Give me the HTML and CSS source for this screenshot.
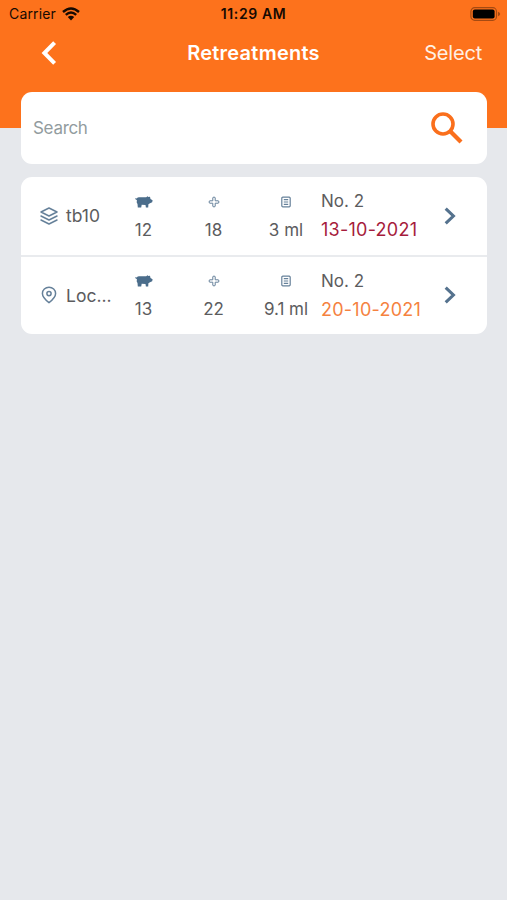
FILE: index.html
```html
<!DOCTYPE html>
<html lang="en">
<head>
    <meta charset="utf-8">
    <title>Retreatments</title>
    <link rel="stylesheet" href="styles.css">
</head>
<body>
    <svg class="sprite" width="0" height="0">
        <symbol id="pig" viewBox="0 0 18 12">
            <path d="M.3 2 L1.8 2.4 Q2.6 1 4.5 1.2 L11.2 1.3 L12.6 .3 L13.4 1 L15 .8 L15.5 3 L17.6 4.3 L17.2 6.2 L15 7.2 L13.4 8.2 L13.2 11.5 L10.9 11.5 L10.5 9 L6.7 8.8 L6.2 11.5 L2.8 11.5 L2.5 8 L1.7 6.5 L1.9 4 L.6 3.4 Z" fill="currentColor"/>
        </symbol>
        <symbol id="plus" viewBox="0 0 12 12">
            <path d="M4.8 1.6 Q6 .4 7.2 1.6 V4.8 H10.4 Q11.6 6 10.4 7.2 H7.2 V10.4 Q6 11.6 4.8 10.4 V7.2 H1.6 Q.4 6 1.6 4.8 H4.8 Z" fill="none" stroke="currentColor" stroke-linejoin="round"/>
        </symbol>
        <symbol id="dose" viewBox="0 0 12 12">
            <rect x="1.8" y="1.2" width="8.4" height="9.6" rx="1" fill="none" stroke="currentColor" stroke-width="1.2"/>
            <path d="M3.8 3.7 h4.4 M3.8 6 h4.4 M3.8 8.3 h4.4" fill="none" stroke="currentColor" stroke-width="1.2"/>
        </symbol>
        <symbol id="next" viewBox="0 0 12 18">
            <path d="M1.7 1.6 L9.4 9 L1.7 16.4" fill="none" stroke="currentColor" stroke-width="3.1"/>
        </symbol>
    </svg>

    <header class="header">
        <div class="status">
            <div class="carrier">
                <span>Carrier</span>
                <svg width="18" height="14" viewBox="0 0 18 14">
                    <path d="M1 5 Q9 -2.2 17 5 M3.8 7.9 Q9 3.2 14.2 7.9" fill="none" stroke="#160a02" stroke-width="2.4"/>
                    <path d="M5.8 10.1 Q9 7.3 12.2 10.1 L9 13.4 Z" fill="#160a02"/>
                </svg>
            </div>
            <div class="time">11:29 AM</div>
            <svg class="battery" width="31" height="14" viewBox="0 0 31 14">
                <rect x=".9" y=".7" width="25.6" height="12.6" rx="3.8" fill="none" stroke="#a54a12" stroke-width="1.2"/>
                <rect x="2.8" y="2.5" width="21.8" height="9" rx="2" fill="#000"/>
                <path d="M28 4.8 Q30.2 5.6 30.2 7 Q30.2 8.4 28 9.2 Z" fill="#a54a12"/>
            </svg>
        </div>
        <div class="nav">
            <svg class="back" width="16" height="24" viewBox="0 0 16 24">
                <path d="M13.6 1.7 L3.4 12 L13.6 22.3" fill="none" stroke="#fff" stroke-width="4"/>
            </svg>
            <h1>Retreatments</h1>
            <span class="select">Select</span>
        </div>
    </header>

    <main class="content">
        <div class="search">
            <span>Search</span>
            <svg width="32" height="32" viewBox="0 0 32 32">
                <circle cx="12" cy="12" r="10" fill="none" stroke="#fa6f1c" stroke-width="3.6"/>
                <path d="M19.5 19.5 L30 30" stroke="#fa6f1c" stroke-width="4.2"/>
            </svg>
        </div>

        <div class="list">
            <div class="row">
                <div class="name">
                    <svg width="18" height="18" viewBox="0 0 18 18">
                        <path d="M9 1 L17 5 L9 9 L1 5 Z M1 9 L9 13 L17 9 M1 13 L9 17 L17 13" fill="none" stroke="currentColor" stroke-width="1.5" stroke-linejoin="round" stroke-linecap="round"/>
                    </svg>
                    <span>tb10</span>
                </div>
                <div class="stat"><svg class="pig"><use href="#pig"/></svg><span>12</span></div>
                <div class="stat"><svg><use href="#plus"/></svg><span>18</span></div>
                <div class="stat"><svg><use href="#dose"/></svg><span>3 ml</span></div>
                <div class="treatment"><span>No. 2</span><span class="date late">13-10-2021</span></div>
                <svg class="next"><use href="#next"/></svg>
            </div>
            <div class="row">
                <div class="name">
                    <svg width="18" height="18" viewBox="0 0 18 18">
                        <path d="M9 16.6 Q2.4 11.4 2.4 7.4 A6.6 6.2 0 0 1 15.6 7.4 Q15.6 11.4 9 16.6 Z" fill="none" stroke="currentColor" stroke-width="1.5"/>
                        <circle cx="9" cy="7.6" r="2.1" fill="none" stroke="currentColor" stroke-width="1.5"/>
                    </svg>
                    <span>Loc...</span>
                </div>
                <div class="stat"><svg class="pig"><use href="#pig"/></svg><span>13</span></div>
                <div class="stat"><svg><use href="#plus"/></svg><span>22</span></div>
                <div class="stat"><svg><use href="#dose"/></svg><span>9.1 ml</span></div>
                <div class="treatment"><span>No. 2</span><span class="date">20-10-2021</span></div>
                <svg class="next"><use href="#next"/></svg>
            </div>
        </div>
    </main>
</body>
</html>
```
FILE: styles.css
```css
* {
    box-sizing: border-box;
}

body {
    margin: 0;
    min-height: 900px;
    background-color: #e6e8ec;
    font-family: Inter, "Liberation Sans", sans-serif;
    font-size: 17px;
    color: #5c5c5e;
}

svg {
    display: block;
    flex-shrink: 0;
}

.sprite {
    position: absolute;
}

.header {
    height: 128px;
    background-color: #fd721c;
}

.status {
    display: grid;
    grid-template-columns: 1fr auto 1fr;
    align-items: center;
    height: 27px;
    padding: 0 6px;
    font-size: 14px;
    color: #160a02;
}

.carrier {
    display: flex;
    align-items: center;
    gap: 6px;
    padding-left: 3px;
    letter-spacing: 0.15px;
}

.time {
    font-weight: 600;
    letter-spacing: 0.6px;
}

.battery {
    justify-self: end;
}

.nav {
    display: grid;
    grid-template-columns: 1fr auto 1fr;
    align-items: center;
    height: 51px;
    padding: 0 25px;
    color: #fff;
}

.back {
    margin-left: 16px;
}

.nav h1 {
    margin: 0;
    font-size: 20px;
    font-weight: 600;
    letter-spacing: 0.25px;
}

.select {
    justify-self: end;
    font-size: 20px;
    letter-spacing: -0.2px;
    color: #fff0e4;
}

.content {
    margin: -36px 20px 0 21px;
}

.search {
    display: flex;
    align-items: center;
    justify-content: space-between;
    height: 72px;
    padding: 0 24px 0 12px;
    border-radius: 11px;
    background-color: #fff;
    letter-spacing: -0.3px;
    color: #929c9e;
}

.list {
    margin-top: 13px;
    border-radius: 11px;
    background-color: #fff;
    overflow: hidden;
}

.row {
    display: grid;
    grid-template-columns: 71px 65px 75px 70px 123px 12px;
    align-items: center;
    height: 78px;
    padding: 0 0 1px 19px;
}

.row + .row {
    height: 79px;
    border-top: 2px solid #e9ebee;
}

.name {
    display: flex;
    align-items: center;
    gap: 8px;
    font-size: 17.5px;
    white-space: nowrap;
}

.name svg,
.stat svg {
    color: #66819a;
}

.stat {
    display: flex;
    flex-direction: column;
    align-items: center;
    white-space: nowrap;
}

.stat svg {
    width: 12px;
    height: 12px;
    margin: 6px 0 10px;
}

.stat .pig {
    width: 18px;
    color: #4b6d8b;
}

.stat span,
.treatment span {
    line-height: 24px;
}

.treatment {
    display: flex;
    flex-direction: column;
    gap: 5px;
}

.treatment .date {
    font-size: 18px;
    letter-spacing: 0.25px;
    color: #f5823f;
}

.treatment .late {
    color: #a61c3c;
}

.next {
    width: 12px;
    height: 18px;
    color: #55728e;
}
```
